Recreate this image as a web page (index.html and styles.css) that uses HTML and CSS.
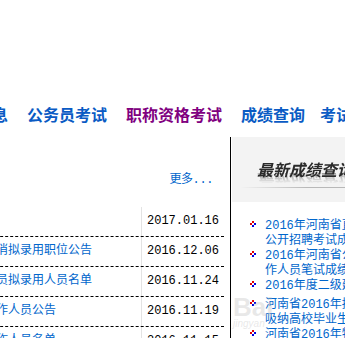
FILE: index.html
```html
<!DOCTYPE html>
<html lang="zh-CN">
<head>
<meta charset="utf-8">
<title>考试信息</title>
<link rel="stylesheet" href="styles.css">
</head>
<body>
<div class="page">
  <nav class="nav">
    <a class="nav-item">信息</a>
    <a class="nav-item">公务员考试</a>
    <a class="nav-item active">职称资格考试</a>
    <a class="nav-item tight">成绩查询</a>
    <a class="nav-item">考试报名</a>
  </nav>
  <div class="main">
    <div class="left">
      <div class="more-row"><a class="more">更多...</a></div>
      <div class="news">
        <div class="row"><span class="title"></span><span class="date">2017.01.16</span></div>
        <div class="row"><span class="title">关于取消拟录用职位公告</span><span class="date">2016.12.06</span></div>
        <div class="row"><span class="title">省公务员拟录用人员名单</span><span class="date">2016.11.24</span></div>
        <div class="row"><span class="title">招聘工作人员公告</span><span class="date">2016.11.19</span></div>
        <div class="row"><span class="title">招聘工作人员名单</span><span class="date">2016.11.15</span></div>
      </div>
    </div>
    <div class="right">
      <div class="panel-head">
        <h2 class="panel-title">最新成绩查询</h2>
        <div class="rule"></div>
      </div>
      <ul class="list">
        <li><svg class="dot" width="6" height="6" viewBox="0 0 6 6"><rect x="2" y="0" width="2" height="2" fill="#e00000"/><rect x="0" y="2" width="2" height="2" fill="#e00000"/><rect x="4" y="2" width="2" height="2" fill="#0000e0"/><rect x="2" y="4" width="2" height="2" fill="#0000e0"/></svg><span class="ln">2016年河南省直属事业单位</span><span class="ln">公开招聘考试成绩查询</span></li>
        <li><svg class="dot" width="6" height="6" viewBox="0 0 6 6"><rect x="2" y="0" width="2" height="2" fill="#e00000"/><rect x="0" y="2" width="2" height="2" fill="#e00000"/><rect x="4" y="2" width="2" height="2" fill="#0000e0"/><rect x="2" y="4" width="2" height="2" fill="#0000e0"/></svg><span class="ln">2016年河南省公务员工</span><span class="ln">作人员笔试成绩查询</span></li>
        <li class="gap"><svg class="dot" width="6" height="6" viewBox="0 0 6 6"><rect x="2" y="0" width="2" height="2" fill="#e00000"/><rect x="0" y="2" width="2" height="2" fill="#e00000"/><rect x="4" y="2" width="2" height="2" fill="#0000e0"/><rect x="2" y="4" width="2" height="2" fill="#0000e0"/></svg><span class="ln">2016年度二级建造师成绩查询</span></li>
        <li><svg class="dot" width="6" height="6" viewBox="0 0 6 6"><rect x="2" y="0" width="2" height="2" fill="#e00000"/><rect x="0" y="2" width="2" height="2" fill="#e00000"/><rect x="4" y="2" width="2" height="2" fill="#0000e0"/><rect x="2" y="4" width="2" height="2" fill="#0000e0"/></svg><span class="ln">河南省2016年招募三支一扶</span><span class="ln">吸纳高校毕业生成绩查询</span></li>
        <li><svg class="dot" width="6" height="6" viewBox="0 0 6 6"><rect x="2" y="0" width="2" height="2" fill="#e00000"/><rect x="0" y="2" width="2" height="2" fill="#e00000"/><rect x="4" y="2" width="2" height="2" fill="#0000e0"/><rect x="2" y="4" width="2" height="2" fill="#0000e0"/></svg><span class="ln">河南省2016年特岗教师成绩</span></li>
      </ul>
      <div class="watermark"><span class="wm-big">Bai</span><span class="wm-small">jingyan</span></div>
    </div>
  </div>
</div>
</body>
</html>
```
FILE: styles.css
```css
html, body {
  margin: 0;
  padding: 0;
}
body {
  width: 345px;
  height: 338px;
  overflow: hidden;
  background: #fff;
  font-family: "Liberation Mono", "Noto Sans CJK SC", monospace;
}
.page {
  padding-top: 106px;
}
.nav {
  display: flex;
  margin-left: -24px;
  height: 16px;
  line-height: 16px;
  font-family: "Noto Sans CJK SC", sans-serif;
  font-size: 16px;
  font-weight: bold;
  white-space: nowrap;
}
.nav-item {
  flex: none;
  color: #0a5bc4;
  text-decoration: none;
  margin-right: 19px;
}
.nav-item.active {
  color: #800080;
}
.nav-item.tight {
  margin-right: 15px;
}
.main {
  display: flex;
  margin-top: 15px;
}
.left {
  flex: 0 0 270px;
  margin-left: -40px;
}
.more-row {
  padding-top: 35px;
  height: 16px;
  line-height: 16px;
  text-align: right;
  padding-right: 17px;
  font-size: 12px;
}
.more {
  color: #0066cc;
  text-decoration: none;
  letter-spacing: -0.4px;
}
.news {
  margin-top: 19px;
  width: 264px;
}
.row {
  display: flex;
  height: 29px;
  border-bottom: 1px dashed #000;
}
.title {
  flex: 0 0 181px;
  font-size: 12px;
  line-height: 29px;
  color: #0066cc;
  white-space: nowrap;
  overflow: hidden;
}
.date {
  flex: 1;
  border-left: 1px solid #e3e3e3;
  padding-left: 5px;
  font-size: 12px;
  line-height: 29px;
  color: #000;
}
.right {
  flex: 0 0 200px;
  border-left: 1px solid #000;
  position: relative;
}
.panel-head {
  margin-left: 1px;
  height: 65px;
  box-sizing: border-box;
  padding-top: 24px;
  background: #f3f3f3;
}
.panel-title {
  margin: 0 0 0 25px;
  font-family: "Noto Sans CJK SC", sans-serif;
  font-size: 16px;
  line-height: 16px;
  font-weight: bold;
  font-style: italic;
  color: #2a2a2a;
  -webkit-box-reflect: below -4px linear-gradient(transparent 35%, rgba(255, 255, 255, 0.45));
}
.rule {
  margin: 10px 0 0 8px;
  height: 1px;
  background: linear-gradient(90deg, #f3f3f3, #b8b8b8 35%, #b8b8b8);
}
.list {
  margin: 17px 0 0;
  padding: 0 0 0 34px;
  list-style: none;
}
.list li {
  position: relative;
  font-size: 12px;
  line-height: 15px;
  color: #0066cc;
  white-space: nowrap;
}
.list li.gap {
  margin-bottom: 4px;
}
.ln {
  display: block;
}
.dot {
  position: absolute;
  left: -15px;
  top: 2px;
}
.watermark {
  position: absolute;
  left: 2px;
  top: 158px;
  color: rgba(190, 190, 190, 0.35);
  pointer-events: none;
}
.wm-big {
  display: block;
  font-family: "Liberation Sans", sans-serif;
  font-size: 26px;
  font-weight: bold;
  line-height: 24px;
}
.wm-small {
  display: block;
  font-family: "Liberation Sans", sans-serif;
  font-size: 10px;
  line-height: 10px;
  font-style: italic;
}
```
